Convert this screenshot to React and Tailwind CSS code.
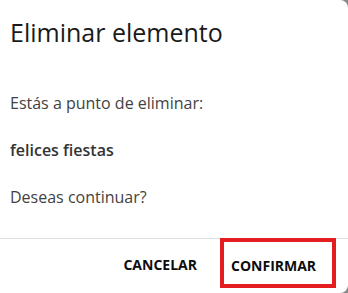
import React from 'react';

const font = { fontFamily: '"Open Sans", "Noto Sans", sans-serif' };

export default function App() {
  return (
    <div className="w-[348px] h-[293px] bg-[#8a8a8a]" style={font}>
      <div className="flex flex-col h-full bg-white rounded-tr-[8px] rounded-br-[8px] overflow-hidden">
        {/* Title */}
        <h2 className="pl-[10px] pt-[16px] text-[25px] leading-[33px] text-[#1a1a1a] font-normal">
          Eliminar elemento
        </h2>

        {/* Body */}
        <div className="flex flex-col gap-[23px] pl-[10px] pt-[42px] text-[16px] leading-[24px] text-[#424242]">
          <p>Estás a punto de eliminar:</p>
          <p className="font-semibold text-[#333333]">felices fiestas</p>
          <p>Deseas continuar?</p>
        </div>

        {/* Footer */}
        <div className="mt-auto h-[55px] border-t border-[#e0e0e0] flex justify-end items-start pr-[12px]">
          <button className="mt-[16px] mr-[23px] text-[14px] leading-[20px] font-bold text-[#0d0d0d] uppercase">
            Cancelar
          </button>
          <button className="-mt-px w-[116px] h-[50px] border-4 border-[#e41e1e] pl-[7px] pt-[6px] text-left text-[14px] leading-[20px] font-bold text-[#0d0d0d] uppercase">
            Confirmar
          </button>
        </div>
      </div>
    </div>
  );
}
